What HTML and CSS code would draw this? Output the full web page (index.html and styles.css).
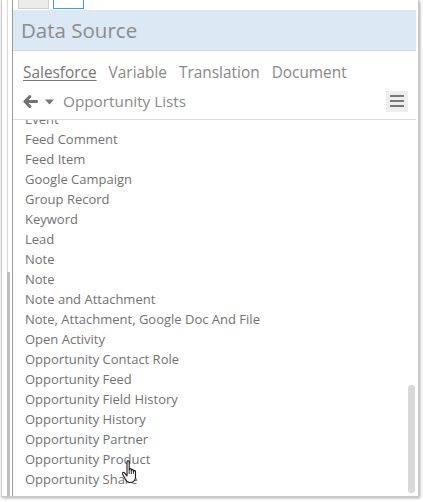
FILE: index.html
```html
<!DOCTYPE html>
<html>
<head>
<meta charset="utf-8">
<link rel="stylesheet" href="styles.css">
</head>
<body>
<div class="frame">
  <div class="gutter"><div class="gutter-thumb"></div></div>
  <div class="panel">
    <div class="top-tabs">
      <span class="ttab ttab-gray"></span>
      <span class="ttab ttab-blue"></span>
    </div>
    <div class="header">Data Source</div>
    <div class="nav">
      <span class="nav-item active">Salesforce</span>
      <span class="nav-item">Variable</span>
      <span class="nav-item">Translation</span>
      <span class="nav-item">Document</span>
    </div>
    <div class="toolbar">
      <svg class="icon-back" width="15" height="13" viewBox="0 0 15 13"><path d="M6.8 1.6 L1.9 6.5 L6.8 11.4 M2.6 6.5 H13.6" fill="none" stroke="#727272" stroke-width="2.9" stroke-linejoin="round" stroke-linecap="round"/></svg>
      <svg class="icon-caret" width="9" height="6" viewBox="0 0 9 6"><path d="M0 0.5 H9 L4.5 5.5 Z" fill="#777"/></svg>
      <span class="crumb">Opportunity Lists</span>
      <span class="menu-btn">
        <span class="bar"></span><span class="bar"></span><span class="bar"></span>
      </span>
    </div>
    <div class="list-wrap">
      <ul class="list">
        <li>Event</li>
        <li>Feed Comment</li>
        <li>Feed Item</li>
        <li>Google Campaign</li>
        <li>Group Record</li>
        <li>Keyword</li>
        <li>Lead</li>
        <li>Note</li>
        <li>Note</li>
        <li>Note and Attachment</li>
        <li>Note, Attachment, Google Doc And File</li>
        <li>Open Activity</li>
        <li>Opportunity Contact Role</li>
        <li>Opportunity Feed</li>
        <li>Opportunity Field History</li>
        <li>Opportunity History</li>
        <li>Opportunity Partner</li>
        <li>Opportunity Product</li>
        <li>Opportunity Share</li>
      </ul>
      <div class="scroll-thumb"></div>
      <svg class="cursor" width="20" height="25" viewBox="0 0 20 25"><path d="M6 1.5 C6 0.5 8.2 0.5 8.2 1.5 V9.5 C8.2 8.3 10.3 8.3 10.3 9.5 V10.5 C10.3 9.3 12.4 9.3 12.4 10.5 V11.5 C12.4 10.3 14.5 10.3 14.5 11.5 V17 C14.5 20 12.5 22.5 10 22.5 H8.5 C6.5 22.5 5.2 21 4.2 19 L1.5 14 C1 12.8 2.6 11.8 3.5 12.8 L6 15.8 Z" fill="#fff" stroke="#1a1a1a" stroke-width="1.1" stroke-linejoin="round"/><path d="M8.2 9.5 V14 M10.3 10.5 V14 M12.4 11.5 V14" stroke="#1a1a1a" stroke-width="0.9"/></svg>
    </div>
  </div>
</div>
</body>
</html>
```

FILE: styles.css
```css
html, body {
  margin: 0;
  padding: 0;
  background: #fff;
}
body {
  width: 423px;
  height: 502px;
  overflow: hidden;
  font-family: "Open Sans", "Noto Sans", sans-serif;
}
.frame {
  position: relative;
  margin-left: 1px;
  width: 416px;
  height: 496px;
  border: 1px solid #c8c8c8;
  border-top: none;
  box-shadow: 1px 1px 3px rgba(0,0,0,0.35);
  display: flex;
  overflow: hidden;
  background: #fff;
}
.gutter {
  position: relative;
  width: 10px;
  flex: none;
}
.gutter::before {
  content: "";
  position: absolute;
  left: 5px;
  top: 0;
  bottom: 0;
  width: 1px;
  background: #d8d8d8;
}
.gutter-thumb {
  position: absolute;
  left: 5px;
  top: 272px;
  width: 3px;
  height: 224px;
  background: #bdbdbd;
}
.panel {
  flex: 1;
  margin-right: 2px;
  border-left: 1px solid #9a9a9a;
  display: flex;
  flex-direction: column;
  min-width: 0;
  padding-bottom: 2px;
}
.top-tabs {
  height: 10px;
  display: flex;
  gap: 4px;
  padding-left: 5px;
}
.ttab {
  width: 31px;
  height: 9px;
  box-sizing: border-box;
}
.ttab-gray {
  background: #ececec;
  border: 1px solid #d0d0d0;
  border-top: none;
}
.ttab-blue {
  background: #fff;
  border: 1px solid #3aa0e0;
  border-top: none;
}
.header {
  height: 40px;
  line-height: 40px;
  background: #dde8f5;
  border-bottom: 1px solid #cfd6de;
  padding-left: 8px;
  font-size: 20.5px;
  color: #8c8c8c;
}
.nav {
  display: flex;
  gap: 12px;
  padding: 11px 0 0 10px;
  height: 21px;
  line-height: 22px;
  font-size: 15.4px;
  color: #888;
}
.nav-item.active {
  color: #777;
  text-decoration: underline;
  text-underline-offset: 2px;
}
.toolbar {
  display: flex;
  align-items: center;
  margin-top: 7px;
  height: 22px;
  padding: 0 8px 7px 10px;
  border-bottom: 1px solid #dcdcdc;
  font-size: 15.3px;
  color: #8a8a8a;
}
.icon-back {
  flex: none;
}
.icon-caret {
  flex: none;
  margin-left: 7px;
  margin-top: 1px;
}
.crumb {
  margin-left: 9px;
  line-height: 22px;
  flex: 1;
}
.menu-btn {
  width: 22px;
  height: 21px;
  background: #eeeeee;
  display: flex;
  flex-direction: column;
  justify-content: center;
  align-items: center;
  gap: 3px;
}
.bar {
  display: block;
  width: 14px;
  height: 2px;
  background: #7a7a7a;
}
.list-wrap {
  position: relative;
  flex: 1;
  overflow: hidden;
}
.list {
  list-style: none;
  margin: -11px 0 0 0;
  padding: 0 0 0 12px;
  font-size: 13px;
  line-height: 20px;
  color: #727272;
}
.scroll-thumb {
  position: absolute;
  right: 1px;
  top: 265px;
  width: 7px;
  height: 108px;
  border-radius: 3px;
  background: #d9d9d9;
}
.cursor {
  position: absolute;
  left: 108px;
  top: 340px;
}
```
